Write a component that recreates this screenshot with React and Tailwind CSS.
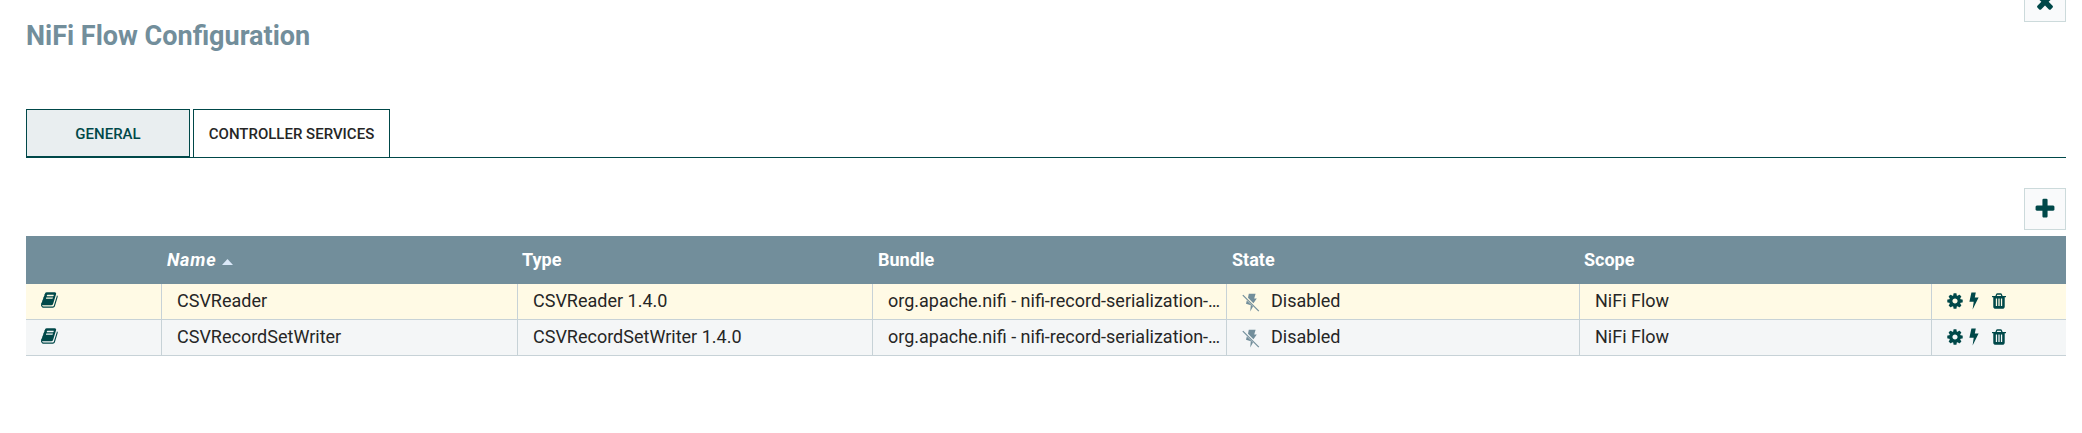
import React from "react";

const BOOK =
  "M1639 478q40 57 18 129l-275 906q-19 64-76.5 107.5t-122.5 43.5h-923q-77 0-148.5-53.5t-99.5-131.5q-24-67-2-127 0-4 3-27t4-37q1-8-3-21.5t-3-19.5q2-11 8-21t16.5-23.5 16.5-23.5q23-38 45-91.5t30-91.5q3-10 .5-30t-.5-28q3-11 17-28t17-23q21-36 42-92t25-90q1-9-2.5-32t.5-28q4-13 22-30.5t22-22.5q19-26 42.5-84.5t27.5-96.5q1-8-3-25.5t-2-26.5q2-8 9-18t18-23 17-21q8-12 16.5-30.5t15-35 16-36 19.5-32 26.5-23.5 36-11.5 47.5 5.5l-1 3q38-9 51-9h761q74 0 114 56t18 130l-274 906q-36 119-71.5 153.5t-128.5 34.5h-869q-27 0-38 15-11 16-1 43 24 70 144 70h923q29 0 56-15.5t35-41.5l300-987q7-22 5-57 38 15 59 43zm-1064 2q-4 13 2 22.5t20 9.5h608q13 0 25.5-9.5t16.5-22.5l21-64q4-13-2-22.5t-20-9.5h-608q-13 0-25.5 9.5t-16.5 22.5zm-83 256q-4 13 2 22.5t20 9.5h608q13 0 25.5-9.5t16.5-22.5l21-64q4-13-2-22.5t-20-9.5h-608q-13 0-25.5 9.5t-16.5 22.5z";
const PLUS =
  "M1600 736v192q0 40-28 68t-68 28h-416v416q0 40-28 68t-68 28h-192q-40 0-68-28t-28-68v-416h-416q-40 0-68-28t-28-68v-192q0-40 28-68t68-28h416v-416q0-40 28-68t68-28h192q40 0 68 28t28 68v416h416q40 0 68 28t28 68z";
const TIMES =
  "M1490 1322q0 40-28 68l-136 136q-28 28-68 28t-68-28l-294-294-294 294q-28 28-68 28t-68-28l-136-136q-28-28-28-68t28-68l294-294-294-294q-28-28-28-68t28-68l136-136q28-28 68-28t68 28l294 294 294-294q28-28 68-28t68 28l136 136q28 28 28 68t-28 68l-294 294 294 294q28 28 28 68z";
const GEAR =
  "M1152 896q0-106-75-181t-181-75-181 75-75 181 75 181 181 75 181-75 75-181zm512-109v222q0 12-8 23t-20 13l-185 28q-19 54-39 91 35 50 107 138 10 12 10 25t-9 23q-27 37-99 108t-94 71q-12 0-26-9l-138-108q-44 23-91 38-16 136-29 186-7 28-36 28h-222q-14 0-24.5-8.5t-11.5-21.5l-28-184q-49-16-90-37l-141 107q-10 9-25 9-14 0-25-11-126-114-165-168-7-10-7-23 0-12 8-23 15-21 51-66.5t54-70.5q-27-50-41-99l-183-27q-13-2-21-12.5t-8-23.5v-222q0-12 8-23t19-13l186-28q14-46 39-92-40-57-107-138-10-12-10-24 0-10 9-23 26-36 98.5-107.5t94.5-71.5q13 0 26 10l138 107q44-23 91-38 16-136 29-186 7-28 36-28h222q14 0 24.5 8.5t11.5 21.5l28 184q49 16 90 37l142-107q9-9 24-9 13 0 25 10 129 119 165 170 7 8 7 22 0 12-8 23-15 21-51 66.5t-54 70.5q26 50 41 98l183 28q13 2 21 12.5t8 23.5z";
const TRASH =
  "M704 1376v-704q0-14-9-23t-23-9h-64q-14 0-23 9t-9 23v704q0 14 9 23t23 9h64q14 0 23-9t9-23zm256 0v-704q0-14-9-23t-23-9h-64q-14 0-23 9t-9 23v704q0 14 9 23t23 9h64q14 0 23-9t9-23zm256 0v-704q0-14-9-23t-23-9h-64q-14 0-23 9t-9 23v704q0 14 9 23t23 9h64q14 0 23-9t9-23zm-544-992h448l-48-117q-7-9-17-11h-317q-10 2-17 11zm928 32v64q0 14-9 23t-23 9h-96v948q0 83-47 143.5t-113 60.5h-832q-66 0-113-58.5t-47-141.5v-952h-96q-14 0-23-9t-9-23v-64q0-14 9-23t23-9h309l70-167q15-37 54-63t79-26h320q40 0 79 26t54 63l70 167h309q14 0 23 9t9 23z";

function Glyph({ d, className, box = "0 0 1792 1792" }) {
  return (
    <svg viewBox={box} className={className} fill="currentColor" fillRule="evenodd" aria-hidden="true">
      <path d={d} />
    </svg>
  );
}

function Bolt() {
  return (
    <svg viewBox="0 0 10 18" className="h-[18px] w-[10px]" fill="currentColor" aria-hidden="true">
      <path d="M2.4 0.6H6.8L5.8 5.4H9.6L3.6 17.4L4.7 9.8H0.4Z" />
    </svg>
  );
}

function BoltOff() {
  return (
    <svg viewBox="0 0 18 19" className="h-[19px] w-[18px] shrink-0" fill="currentColor" aria-hidden="true">
      <path d="M6.8 0.8H13.6L12.2 5.6H14.8L11.4 10.2L6 4.8Z" />
      <path d="M4.8 7.4L11 13.4L8.2 18.6L8.8 12.2L4 10.8Z" />
      <path d="M0.8 2.2L16.8 18.2" stroke="currentColor" strokeWidth="1.2" />
    </svg>
  );
}

const COLS = "grid grid-cols-[136px_356px_355px_354px_353px_352px_134px]";

function Cell({ children, last = false }) {
  return (
    <div className={last ? "flex items-center pb-0.5 pl-[15px]" : "flex min-w-0 items-center border-r border-[#c7d2d7] pb-0.5 pl-[15px] whitespace-nowrap"}>
      {children}
    </div>
  );
}

function Row({ name, type, tint }) {
  return (
    <div className={`${COLS} h-9 border-b border-[#c7d2d7] text-[18px] text-[#262626] ${tint}`}>
      <Cell>
        <Glyph d={BOOK} className="mt-[-1px] h-[18px] w-[18px] text-[#004849]" />
      </Cell>
      <Cell>{name}</Cell>
      <Cell>{type}</Cell>
      <Cell>org.apache.nifi - nifi-record-serialization-…</Cell>
      <Cell>
        <span className="flex items-center gap-[11px]">
          <span className="pt-[3px] text-[#728e9b]"><BoltOff /></span>
          Disabled
        </span>
      </Cell>
      <Cell>NiFi Flow</Cell>
      <Cell last>
        <span className="flex items-center text-[#004849]">
          <Glyph d={GEAR} box="128 0 1536 1792" className="h-[18px] w-[16px]" />
          <span className="ml-[6px] pt-px"><Bolt /></span>
          <Glyph d={TRASH} box="192 0 1408 1792" className="ml-[13px] h-[18px] w-[14px]" />
        </span>
      </Cell>
    </div>
  );
}

export default function App() {
  return (
    <div className="flex h-[433px] w-[2082px] flex-col overflow-hidden bg-white pl-[26px] pr-4 font-['Roboto',sans-serif]">
      <div className="flex h-[109px] shrink-0 items-start justify-between">
        <h1 className="pt-[18px] text-[27px] font-bold leading-9 text-[#728e9b]">NiFi Flow Configuration</h1>
        <button className="-mt-5 flex h-[42px] w-[42px] items-center justify-center border border-[#ccdadb] bg-[#f9fafb] text-[#004849]">
          <Glyph d={TIMES} className="h-6 w-6" />
        </button>
      </div>
      <div className="flex h-[49px] shrink-0 gap-[3px] border-b border-[#004849] text-[15px] font-medium">
        <div className="flex w-[164px] items-center justify-center border border-[#004849] bg-[#e9eef0] pt-0.5 text-[#004849]">GENERAL</div>
        <div className="flex w-[197px] items-center justify-center border border-b-0 border-[#004849] pt-px text-[#262626]">CONTROLLER SERVICES</div>
      </div>
      <div className="flex h-[78px] shrink-0 items-start justify-end pt-[30px]">
        <button className="flex h-[42px] w-[42px] items-center justify-center border border-[#ccdadb] bg-[#f9fafb] text-[#004849]">
          <Glyph d={PLUS} className="h-6 w-6" />
        </button>
      </div>
      <div className={`${COLS} h-12 items-center bg-[#728e9b] pb-px text-[18px] font-bold text-white`}>
        <span />
        <span className="flex items-center gap-[6px] pl-[5px] italic">
          <span className="tracking-[0.8px]">Name</span>
          <svg viewBox="0 0 11 6" className="mt-1 h-[6px] w-[11px]" aria-hidden="true">
            <path d="M0 6L5.5 0L11 6Z" fill="#dbe9f9" />
          </svg>
        </span>
        <span className="pl-1">Type</span>
        <span className="pl-[5px]">Bundle</span>
        <span className="pl-[5px]">State</span>
        <span className="pl-1">Scope</span>
        <span />
      </div>
      <Row name="CSVReader" type="CSVReader 1.4.0" tint="bg-[#fffae5]" />
      <Row name="CSVRecordSetWriter" type="CSVRecordSetWriter 1.4.0" tint="bg-[#f4f6f7]" />
    </div>
  );
}
